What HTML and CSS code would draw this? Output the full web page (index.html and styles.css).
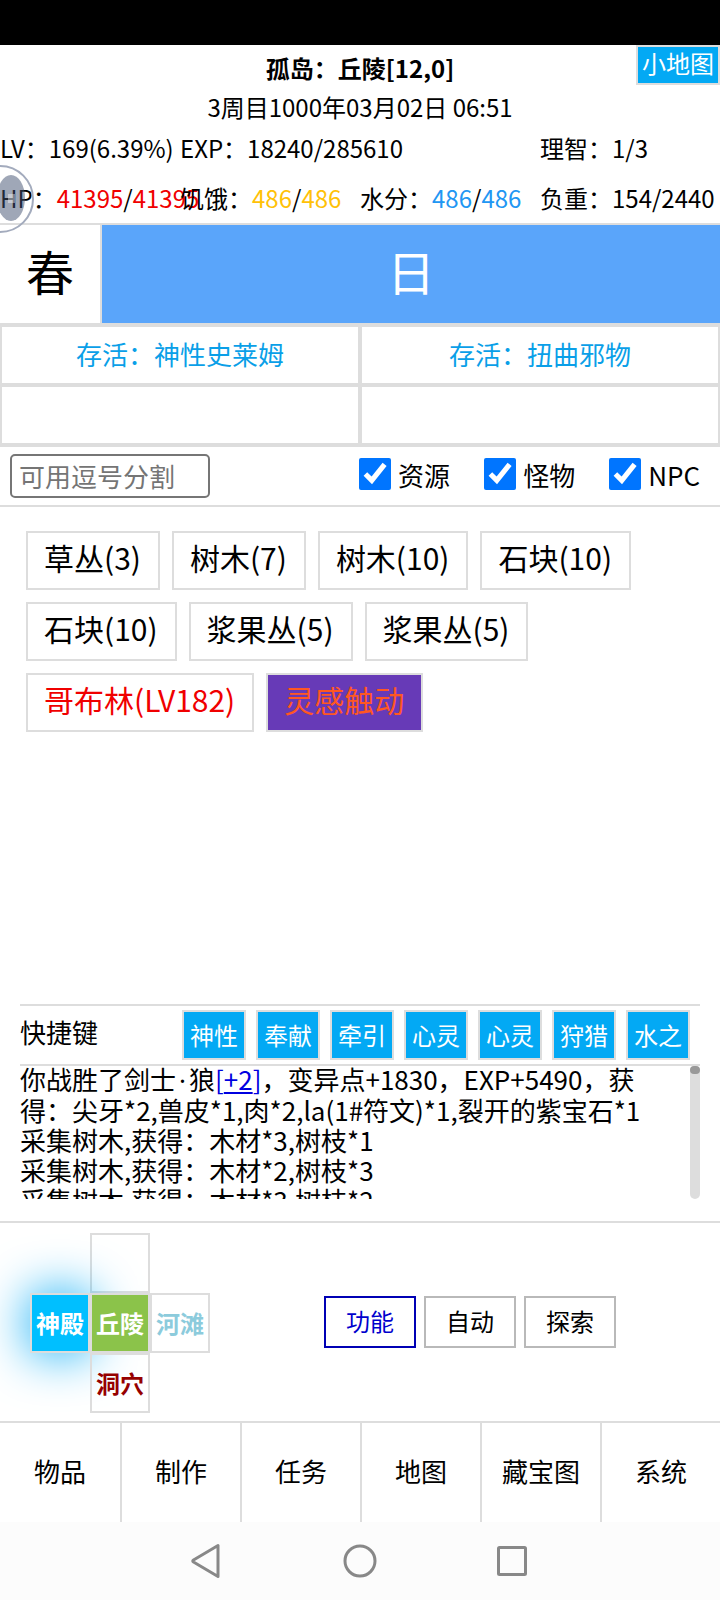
FILE: index.html
```html
<!DOCTYPE html>
<html lang="zh-CN">
<head>
    <meta charset="UTF-8" />
    <meta name="viewport" content="width=device-width, initial-scale=1.0" />
    <title>孤岛</title>
    <link rel="stylesheet" href="styles.css">
</head>
<body>
    <div class="status-bar"></div>

    <header class="header">
        <h1 class="place">孤岛：丘陵[12,0]</h1>
        <div class="date">3周目1000年03月02日 06:51</div>
        <button class="blue-btn minimap-btn">小地图</button>
        <div class="stats">
            <div>LV：169(6.39%)</div>
            <div class="wide">EXP：18240/285610</div>
            <div>理智：1/3</div>
            <div>HP：<span class="hp">41395</span>/<span class="hp">41395</span></div>
            <div>饥饿：<span class="hunger">486</span>/<span class="hunger">486</span></div>
            <div>水分：<span class="water">486</span>/<span class="water">486</span></div>
            <div>负重：154/2440</div>
        </div>
        <svg class="float-ball" viewBox="0 0 36 70" aria-hidden="true">
            <circle cx="0" cy="35" r="33" fill="none" stroke="#a3abbd" stroke-width="2" />
            <ellipse cx="11" cy="34" rx="14" ry="23" fill="#405070" fill-opacity="0.5" />
            <path d="M8 30h7v9H8z" fill="#fff" fill-opacity="0.4" />
        </svg>
    </header>

    <section class="season">
        <div class="season-name">春</div>
        <div class="season-time">日</div>
    </section>

    <section class="bosses">
        <div>存活：神性史莱姆</div>
        <div>存活：扭曲邪物</div>
        <div></div>
        <div></div>
    </section>

    <section class="filter">
        <input type="text" class="filter-text" placeholder="可用逗号分割" aria-label="筛选" />
        <div class="checks">
            <label><input type="checkbox" checked />资源</label>
            <label><input type="checkbox" checked />怪物</label>
            <label><input type="checkbox" checked />NPC</label>
        </div>
    </section>

    <main class="things">
        <button>草丛(3)</button>
        <button>树木(7)</button>
        <button>树木(10)</button>
        <button>石块(10)</button>
        <button>石块(10)</button>
        <button>浆果丛(5)</button>
        <button>浆果丛(5)</button>
        <button class="monster">哥布林(LV182)</button>
        <button class="event">灵感触动</button>
    </main>

    <section class="shortcuts">
        <span class="shortcuts-title">快捷键</span>
        <div class="shortcuts-list">
            <button class="blue-btn">神性</button>
            <button class="blue-btn">奉献</button>
            <button class="blue-btn">牵引</button>
            <button class="blue-btn">心灵</button>
            <button class="blue-btn">心灵</button>
            <button class="blue-btn">狩猎</button>
            <button class="blue-btn">水之</button>
        </div>
    </section>

    <section class="log">
        <div class="log-text">
            <div>你战胜了剑士<span class="dot">·</span>狼<a href="#">[<u>+2</u>]</a>，变异点+1830，EXP+5490，获得：尖牙*2,兽皮*1,肉*2,la(1#符文)*1,裂开的紫宝石*1</div>
            <div>采集树木,获得：木材*3,树枝*1</div>
            <div>采集树木,获得：木材*2,树枝*3</div>
            <div>采集树木,获得：木材*3,树枝*2</div>
        </div>
        <div class="scrollbar"><div class="thumb"></div></div>
    </section>

    <section class="control">
        <div class="map">
            <button class="cell up" aria-label="上"></button>
            <button class="cell left">神殿</button>
            <button class="cell center">丘陵</button>
            <button class="cell right">河滩</button>
            <button class="cell down">洞穴</button>
        </div>
        <div class="actions">
            <button class="active">功能</button>
            <button>自动</button>
            <button>探索</button>
        </div>
    </section>

    <nav class="menu">
        <button>物品</button>
        <button>制作</button>
        <button>任务</button>
        <button>地图</button>
        <button>藏宝图</button>
        <button>系统</button>
    </nav>

    <footer class="system-bar">
        <svg viewBox="0 0 36 36"><path d="M28 2.500v31L3.500 19q-1.500-1 0-2z" /></svg>
        <svg viewBox="0 0 36 36"><circle cx="18" cy="18" r="15" /></svg>
        <svg viewBox="0 0 36 36"><rect x="4.500" y="4.500" width="27" height="27" rx="1" /></svg>
    </footer>
</body>
</html>
```
FILE: styles.css
```css
:root {
    --line: #ddd;
    --blue: #03a9f4;
}

* {
    box-sizing: border-box;
}

body {
    margin: 0;
    min-height: 100vh;
    display: flex;
    flex-direction: column;
    background: #fff;
    color: #000;
    font-family: "Noto Sans CJK SC", sans-serif;
    font-size: 26px;
    line-height: 30px;
}

button {
    padding: 0;
    border: 2px solid var(--line);
    background: none;
    color: inherit;
    font: inherit;
    cursor: pointer;
}

.blue-btn {
    background: var(--blue);
    color: #fff;
    font-size: 24px;
}

.status-bar {
    height: 45px;
    background: #000;
}

/* header */
.header {
    position: relative;
    font-size: 24px;
    text-align: center;
}

.place {
    margin: 0;
    font-size: 24px;
    line-height: 46px;
}

.date {
    line-height: 32px;
}

.minimap-btn {
    position: absolute;
    top: 0;
    right: 0;
    width: 84px;
    height: 40px;
    padding-bottom: 4px;
}

.stats {
    display: grid;
    grid-template-columns: repeat(4, 1fr);
    line-height: 50px;
    text-align: left;
    white-space: nowrap;
}

.stats div {
    min-width: 0;
}

.stats .wide {
    grid-column: span 2;
}

.hp {
    color: #f00000;
}

.hunger {
    color: #ffc107;
}

.water {
    color: #2196f3;
}

.float-ball {
    position: absolute;
    left: 0;
    bottom: -11px;
    width: 36px;
    height: 70px;
}

/* season */
.season {
    display: flex;
    border: solid var(--line);
    border-width: 2px 0;
    font-size: 48px;
    line-height: 90px;
    text-align: center;
}

.season div {
    padding-bottom: 8px;
}

.season-name {
    width: 102px;
    border-right: 2px solid var(--line);
}

.season-time {
    flex: 1;
    background: #5aa5fa;
    color: #fff;
}

.bosses {
    display: grid;
    grid-template-columns: 1fr 1fr;
    grid-auto-rows: 60px;
    color: #0a9fe8;
    line-height: 54px;
    text-align: center;
}

.bosses div {
    border: 2px solid var(--line);
}

/* filter */
.filter {
    display: flex;
    justify-content: space-between;
    align-items: center;
    height: 62px;
    padding: 0 20px 0 10px;
    border: solid var(--line);
    border-width: 2px 0;
}

.filter-text {
    width: 200px;
    height: 44px;
    padding: 0 7px 2px;
    border: 2px solid #767676;
    border-radius: 5px;
    font: inherit;
}

.filter-text::placeholder {
    color: #757575;
}

.checks {
    display: flex;
    gap: 34px;
}

.checks label {
    display: flex;
    gap: 7px;
    line-height: 34px;
}

.checks input {
    width: 32px;
    height: 32px;
    margin: 0 0 4px;
}

/* things around */
.things {
    flex: 1;
    display: flex;
    flex-wrap: wrap;
    align-content: flex-start;
    gap: 12px;
    padding: 24px 26px;
}

.things button {
    height: 59px;
    padding: 0 17px 8px 16px;
    font-size: 30px;
}

.things .monster {
    color: #f00000;
}

.things .event {
    background: #673ab7;
    color: #ff5722;
}

.shortcuts {
    display: flex;
    justify-content: space-between;
    align-items: center;
    height: 62px;
    margin: 0 20px;
    padding-right: 10px;
    border: solid var(--line);
    border-width: 2px 0;
}

.shortcuts-title {
    padding-bottom: 6px;
}

.shortcuts-list {
    display: flex;
    gap: 10px;
}

.shortcuts-list button {
    width: 64px;
    height: 50px;
}

/* battle log */
.log {
    display: flex;
    height: 133px;
    margin: 0 20px 22px;
    overflow: hidden;
}

.log-text {
    flex: 1;
    margin-top: -2px;
    padding-right: 20px;
}

.log .dot {
    padding: 0 3px;
    font-family: "Noto Sans", sans-serif;
}

.log a {
    color: #0000e0;
    text-decoration: none;
}

.scrollbar {
    width: 10px;
    border-radius: 5px;
    background: #ddd;
}

.thumb {
    height: 8px;
    border-radius: 4px;
    background: #999;
}

/* map and actions */
.control {
    display: flex;
    align-items: center;
    gap: 114px;
    height: 202px;
    padding-left: 30px;
    border: solid var(--line);
    border-width: 2px 0;
}

.map {
    display: grid;
    grid-template-columns: repeat(3, 60px);
    grid-template-rows: repeat(3, 60px);
    grid-template-areas:
        ". up ."
        "left center right"
        ". down .";
    margin-top: 2px;
    font-size: 24px;
    font-weight: bold;
}

.up {
    grid-area: up;
}

.left {
    grid-area: left;
    background: #00bfff;
    color: #fff;
    box-shadow: 0 0 50px var(--blue);
}

.center {
    grid-area: center;
    background: #8bc34a;
    color: #fff;
}

.right {
    grid-area: right;
    background: #fff;
    color: #8ccbdc;
}

.down {
    grid-area: down;
    color: #960000;
}

.actions {
    display: flex;
    gap: 8px;
}

.actions button {
    width: 92px;
    height: 52px;
    padding-bottom: 2px;
    border-color: #b9b9b9;
    font-size: 24px;
}

.actions .active {
    border-color: #0000b4;
    color: #0000cd;
}

.menu {
    display: grid;
    grid-template-columns: repeat(6, 1fr);
    height: 99px;
}

.menu button {
    padding-bottom: 4px;
    border-width: 0 0 0 2px;
}

.menu button:first-child {
    border-left: 0;
}

.system-bar {
    display: flex;
    justify-content: center;
    align-items: center;
    gap: 116px;
    height: 78px;
    background: #fcfcfc;
}

.system-bar svg {
    width: 36px;
    height: 36px;
    fill: none;
    stroke: #888;
    stroke-width: 3;
    stroke-linejoin: round;
}
```
